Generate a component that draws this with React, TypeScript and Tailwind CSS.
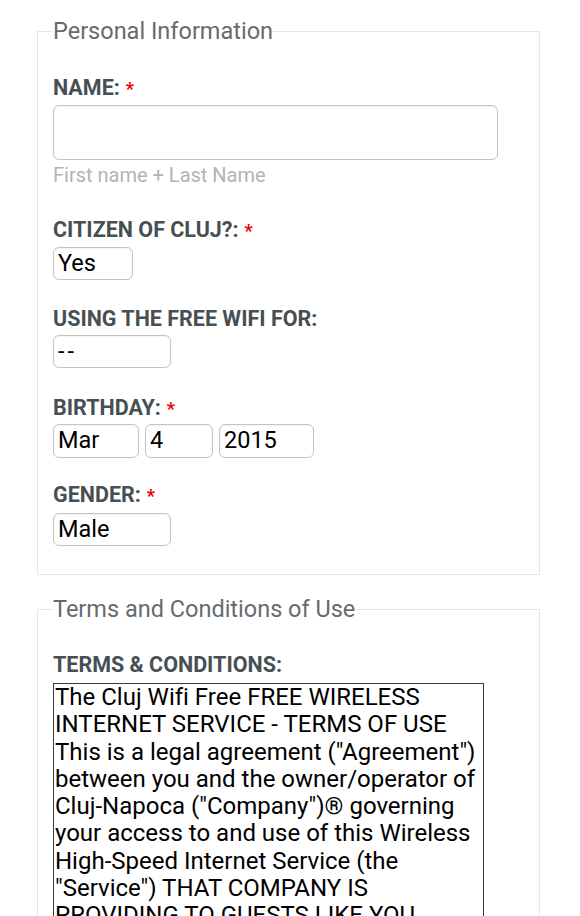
import React from "react";

const font = { fontFamily: "Roboto, 'Noto Sans', sans-serif" };

function Label({ text, req }: { text: string; req?: boolean }) {
  return (
    <div className="h-[22px] text-[21.5px] font-bold text-[#474f53] leading-[22px] whitespace-nowrap">
      {text}
      {req && <span className="text-[#e00] ml-[6px] text-[18px]">*</span>}
    </div>
  );
}

function Sel({ value, w, h = "h-[33px]", extra = "" }: { value: string; w: string; h?: string; extra?: string }) {
  return (
    <div
      className={`${w} ${h} border border-[#c4c4c4] rounded-[6px] pl-[4px] flex items-center text-[23.5px] text-black leading-none bg-white shadow-[inset_0_1px_1px_rgba(0,0,0,0.05)] ${extra}`}
    >
      {value}
    </div>
  );
}

const terms = [
  "The Cluj Wifi Free FREE WIRELESS",
  "INTERNET SERVICE - TERMS OF USE",
  'This is a legal agreement ("Agreement")',
  "between you and the owner/operator of",
  'Cluj-Napoca ("Company")® governing',
  "your access to and use of this Wireless",
  "High-Speed Internet Service (the",
  '"Service") THAT COMPANY IS',
  "PROVIDING TO GUESTS LIKE YOU.",
];

export default function App() {
  return (
    <div className="bg-white w-[580px] h-[916px] overflow-hidden [font-variant-ligatures:none]" style={font}>
      <fieldset className="ml-[37px] w-[503px] border border-[#e6e6e6] pl-[15px] pr-[15px] pb-[28px] mt-[16px]">
        <legend className="text-[23.5px] text-[#666b6e] leading-[30px] px-0">Personal Information</legend>
        <div className="mt-[31px]">
          <Label text="NAME:" req />
          <div className="mt-[6px] w-[445px] h-[55px] border border-[#c4c4c4] rounded-[6px] shadow-[inset_0_1px_1px_rgba(0,0,0,0.05)]" />
          <div className="mt-[3px] text-[20px] text-[#b0b4b6] leading-[24px]">First name + Last Name</div>
        </div>
        <div className="mt-[32px]">
          <Label text="CITIZEN OF CLUJ?:" req />
          <div className="mt-[6px]"><Sel value="Yes" w="w-[80px]" /></div>
        </div>
        <div className="mt-[28px]">
          <Label text="USING THE FREE WIFI FOR:" />
          <div className="mt-[5px]"><Sel value="--" w="w-[118px]" extra="tracking-[3px]" /></div>
        </div>
        <div className="mt-[29px]">
          <Label text="BIRTHDAY:" req />
          <div className="mt-[5px] flex gap-[6px]">
            <Sel value="Mar" w="w-[86px]" h="h-[34px]" />
            <Sel value="4" w="w-[68px]" h="h-[34px]" />
            <Sel value="2015" w="w-[95px]" h="h-[34px]" />
          </div>
        </div>
        <div className="mt-[26px]">
          <Label text="GENDER:" req />
          <div className="mt-[7px]"><Sel value="Male" w="w-[118px]" /></div>
        </div>
      </fieldset>
      <fieldset className="ml-[37px] mt-[19px] w-[503px] border border-[#e6e6e6] pl-[15px] pr-[15px] pb-[28px]">
        <legend className="text-[23.5px] text-[#666b6e] leading-[30px] px-0">Terms and Conditions of Use</legend>
        <div className="mt-[30px]">
          <Label text="TERMS & CONDITIONS:" />
          <div className="mt-[7px] w-[431px] h-[300px] border border-[#3a3a3a] pl-[1px] text-[24px] leading-[27.3px] text-black overflow-hidden">
            {terms.map((t) => (
              <div key={t} className="whitespace-nowrap">{t}</div>
            ))}
          </div>
        </div>
      </fieldset>
    </div>
  );
}
